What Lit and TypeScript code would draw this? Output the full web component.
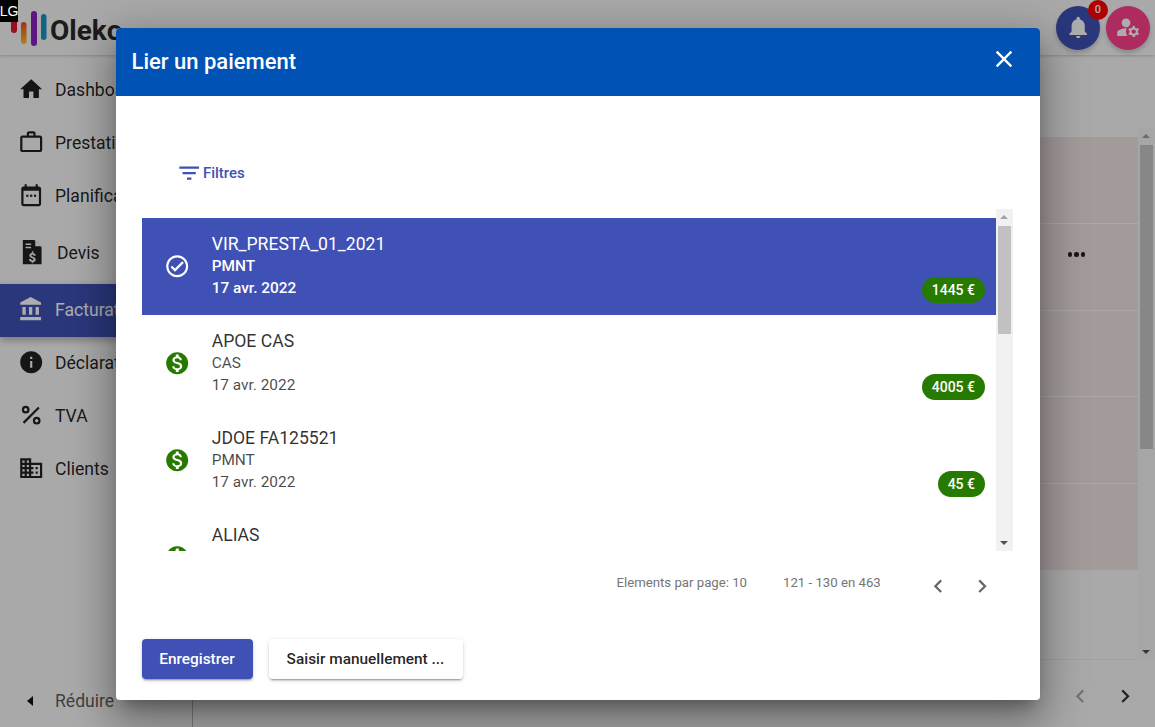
import { LitElement, html, css, svg } from "lit";
import { customElement } from "lit/decorators.js";

const P: Record<string, any> = {
  home: svg`<path d="M10 20v-6h4v6h5v-8h3L12 3 2 12h3v8z"/>`,
  work: svg`<path d="M14 6V4h-4v2h4zM4 8v11h16V8H4zm16-2c1.110 0 2 .89 2 2v11c0 1.110-.89 2-2 2H4c-1.110 0-2-.89-2-2l.01-11c0-1.110.88-2 1.990-2h4V4c0-1.110.89-2 2-2h4c1.110 0 2 .89 2 2v2h4z"/>`,
  cal: svg`<path d="M19 4h-1V2h-2v2H8V2H6v2H5c-1.100 0-2 .9-2 2v14c0 1.100.9 2 2 2h14c1.100 0 2-.9 2-2V6c0-1.100-.9-2-2-2zm0 16H5V8h14v12z"/><rect x="7.500" y="11.500" width="2" height="2"/><rect x="11" y="11.500" width="2" height="2"/><rect x="14.500" y="11.500" width="2" height="2"/>`,
  devis: svg`<path fill-rule="evenodd" d="M3.500 1h10.500l6.500 6.500V23H3.500zM6 4v1.500h5V4zM6 7v1.500h5V7z"/><path d="M14.800 1.500v5.200h5.200z" fill="#fafafa"/><text x="12" y="20.500" text-anchor="middle" font-family="Roboto" font-weight="700" font-size="12" fill="#fafafa">$</text>`,
  bank: svg`<path d="M4 10v7h3v-7H4zm6 0v7h3v-7h-3zM2 22h19v-3H2v3zm14-12v7h3v-7h-3zm-4.500-9L2 6v2h19V6l-9.500-5z"/>`,
  info: svg`<path d="M12 2C6.480 2 2 6.480 2 12s4.480 10 10 10 10-4.480 10-10S17.520 2 12 2zm1 15h-2v-6h2v6zm0-8h-2V7h2v2z"/>`,
  pct: svg`<path d="M18.300 4.300 4.300 18.300l1.400 1.400 14-14z"/><path fill-rule="evenodd" d="M7 3.500a3.500 3.500 0 1 0 0 7 3.500 3.500 0 0 0 0-7zm0 2a1.500 1.500 0 1 1 0 3 1.500 1.500 0 0 1 0-3zM17 13.500a3.500 3.500 0 1 0 0 7 3.500 3.500 0 0 0 0-7zm0 2a1.500 1.500 0 1 1 0 3 1.500 1.500 0 0 1 0-3z"/>`,
  domain: svg`<path d="M12 7V3H2v18h20V7H12zM6 19H4v-2h2v2zm0-4H4v-2h2v2zm0-4H4V9h2v2zm0-4H4V5h2v2zm4 12H8v-2h2v2zm0-4H8v-2h2v2zm0-4H8V9h2v2zm0-4H8V5h2v2zm10 12h-8v-2h2v-2h-2v-2h2v-2h-2V9h8v10zm-2-8h-2v2h2v-2zm0 4h-2v2h2v-2z"/>`,
  money: svg`<path d="M12 2C6.480 2 2 6.480 2 12s4.480 10 10 10 10-4.480 10-10S17.520 2 12 2zm1.410 16.090V20h-2.670v-1.930c-1.710-.36-3.160-1.460-3.270-3.400h1.960c.1 1.050.82 1.870 2.650 1.870 1.960 0 2.400-.98 2.400-1.590 0-.83-.44-1.610-2.670-2.140-2.480-.6-4.180-1.620-4.180-3.670 0-1.720 1.390-2.840 3.110-3.210V4h2.670v1.950c1.860.45 2.790 1.860 2.850 3.390H14.300c-.05-1.110-.64-1.870-2.220-1.870-1.500 0-2.400.68-2.400 1.640 0 .84.65 1.390 2.670 1.910s4.180 1.390 4.180 3.910c-.01 1.830-1.380 2.830-3.120 3.160z"/>`,
  check: svg`<path d="M12 2C6.480 2 2 6.480 2 12s4.480 10 10 10 10-4.480 10-10S17.520 2 12 2zm0 18c-4.410 0-8-3.590-8-8s3.590-8 8-8 8 3.590 8 8-3.590 8-8 8zm4.590-12.420L10 14.170l-2.590-2.580L6 13l4 4 8-8z"/>`,
  bell: svg`<path d="M12 22c1.100 0 2-.9 2-2h-4c0 1.100.89 2 2 2zm6-6v-5c0-3.070-1.640-5.640-4.500-6.320V4c0-.83-.67-1.500-1.500-1.500s-1.500.67-1.500 1.500v.68C7.630 5.360 6 7.920 6 11v5l-2 2v1h16v-1l-2-2z"/>`,
  manage: svg`<circle cx="10" cy="8" r="4"/><path d="M10.670 13.020c-.22-.01-.44-.02-.67-.02-2.420 0-4.680.67-6.610 1.820-.88.52-1.390 1.500-1.390 2.530V20h9.260c-.79-1.130-1.260-2.510-1.260-4 0-1.070.25-2.070.67-2.980z"/><path d="M20.750 16c0-.22-.03-.42-.06-.63l1.140-1.010-1-1.730-1.450.49c-.32-.27-.68-.48-1.080-.63L18 11h-2l-.3 1.490c-.4.15-.76.36-1.080.63l-1.450-.49-1 1.730 1.140 1.010c-.03.21-.06.41-.06.63s.03.42.06.63l-1.140 1.010 1 1.730 1.450-.49c.32.27.68.48 1.080.63L16 21h2l.3-1.490c.4-.15.76-.36 1.080-.63l1.450.49 1-1.730-1.140-1.010c.03-.21.06-.41.06-.63zM17 18c-1.100 0-2-.9-2-2s.9-2 2-2 2 .9 2 2-.9 2-2 2z"/>`,
  close: svg`<path d="M19 6.410 17.590 5 12 10.590 6.410 5 5 6.410 10.590 12 5 17.590 6.410 19 12 13.410 17.590 19 19 17.590 13.410 12z"/>`,
  left: svg`<path d="M15.410 7.410 14 6l-6 6 6 6 1.410-1.410L10.830 12z"/>`,
  right: svg`<path d="M10 6 8.590 7.410 13.170 12l-4.580 4.590L10 18l6-6z"/>`,
  filter: svg`<path d="M10 18h4v-2h-4v2zM3 6v2h18V6H3zm3 7h12v-2H6v2z"/>`,
};
const ic = (n: string, cls = "") => html`<svg class="ic ${cls}" viewBox="0 0 24 24" fill="currentColor">${P[n]}</svg>`;

const NAV = [
  ["home", "Dashboard"], ["work", "Prestations"], ["cal", "Planification"], ["devis", "Devis"],
  ["bank", "Facturation"], ["info", "Déclarations"], ["pct", "TVA"], ["domain", "Clients"],
];
const ITEMS = [
  ["VIR_PRESTA_01_2021", "PMNT", "17 avr. 2022", "1445 €", true],
  ["APOE CAS", "CAS", "17 avr. 2022", "4005 €", false],
  ["JDOE FA125521", "PMNT", "17 avr. 2022", "45 €", false],
  ["ALIAS", "CAS", "17 avr. 2022", "120 €", false],
];

@customElement("app-root")
export class AppRoot extends LitElement {
  static styles = css`
    :host { display: block; position: relative; width: 1155px; height: 727px; overflow: hidden; background: #fafafa; font-family: Roboto, sans-serif; color: rgba(0,0,0,.87); }
    * { box-sizing: border-box; }
    .ic { display: block; width: 26.4px; height: 26.4px; flex: none; }
    .shell { display: flex; flex-direction: column; height: 727px; }
    .top { height: 55px; flex: none; display: flex; align-items: center; background: #fafafa; box-shadow: 0 1px 3px rgba(0,0,0,.2); position: relative; z-index: 2; padding: 0 5px 0 11px; }
    .logo { display: flex; align-items: center; flex: 1; }
    .logo svg { display: block; width: 36px; height: 40px; margin-top: 5px; }
    .logo span { font-size: 28px; font-weight: 700; color: #2a2a2a; margin-left: 3px; margin-top: 5px; }
    .fab { width: 44px; height: 44px; border-radius: 50%; display: flex; align-items: center; justify-content: center; color: #fff; position: relative; box-shadow: 0 3px 5px rgba(0,0,0,.2); }
    .fab.blue { background: #3f51b5; margin-right: 6px; }
    .fab.pink { background: #ff408c; }
    .notif { position: absolute; top: -6px; right: -8px; width: 20px; height: 20px; border-radius: 50%; background: #ff0000; font-size: 11px; font-weight: 500; display: flex; align-items: center; justify-content: center; color: #fff; }
    .main { flex: 1; display: flex; min-height: 0; }
    .side { width: 192px; flex: none; display: flex; flex-direction: column; padding-top: 9px; background: #fafafa; }
    .nav { height: 53px; flex: none; display: flex; align-items: center; gap: 11.1px; padding: 0 0 2px 17.5px; font-size: 17.6px; white-space: nowrap; }
    .nav.on { background: #3f51b5; color: #fff; box-shadow: 0 3px 8px rgba(0,0,0,.3); }
    .nav.devis { height: 61px; gap: 12px; padding-left: 18.6px; }
    .spring { flex: 1; }
    .reduce { height: 67px; flex: none; display: flex; align-items: center; padding: 14px 0 0 27px; color: rgba(0,0,0,.65); font-size: 17.6px; }
    .reduce i { width: 0; height: 0; border: 5px solid transparent; border-left-width: 0; border-right: 6px solid #111; margin-right: 22px; }
    .work { flex: 1; min-width: 0; display: flex; flex-direction: column; border-left: 1px solid #b8b8b8; }
    .mid { flex: 1; display: flex; min-height: 0; }
    .pane { flex: 1; padding-top: 82px; border-bottom: 1px solid #eee; }
    .table { height: 433px; background: #f1e3e3; display: flex; flex-direction: column; }
    .row { flex: 1; border-bottom: 1px solid #fafafa; display: flex; align-items: center; justify-content: flex-end; padding-right: 53px; }
    .row:last-child { border-bottom: 0; }
    .dots { display: flex; gap: 2px; margin-top: -24px; }
    .dots b { width: 4.500px; height: 4.500px; border-radius: 50%; background: #222; }
    .psb { width: 17px; flex: none; margin-top: 73px; background: #f5f5f5; position: relative; display: flex; flex-direction: column; align-items: center; padding-top: 17px; }
    .psb u { display: block; width: 13px; height: 304px; background: #c8c8c8; }
    .arr-up { position: absolute; top: 6px; left: 4px; border: 4px solid transparent; border-top: 0; border-bottom: 4px solid #a0a0a0; }
    .arr-dn { position: absolute; bottom: 6px; left: 4px; border: 4px solid transparent; border-bottom: 0; border-top: 4px solid #505050; }
    .foot { height: 67px; flex: none; display: flex; align-items: center; justify-content: flex-end; padding: 6px 16.800px 0 0; gap: 18.600px; color: #333; }
    .foot .dim { color: #aaa; }

    .overlay { position: absolute; inset: 0; background: rgba(0,0,0,.32); z-index: 5; display: flex; align-items: center; justify-content: center; }
    .wrap { border-radius: 4px; box-shadow: 0 11px 15px -7px rgba(0,0,0,.3), 0 24px 38px 3px rgba(0,0,0,.2), 0 9px 46px 8px rgba(0,0,0,.18); }
    .dlg { width: 924px; height: 672px; background: #fff; border-radius: 4px; display: flex; flex-direction: column; overflow: hidden; }
    .dh { height: 68px; flex: none; background: #0052b4; color: #fff; display: flex; align-items: center; justify-content: space-between; padding: 0 22px 0 16px; font-size: 22px; font-weight: 500; }
    .dh .ic { width: 28px; height: 28px; margin-top: -6px; }
    .filters { height: 113px; flex: none; display: flex; align-items: center; gap: 1px; padding: 41px 0 0 60px; color: #3f51b5; font-size: 15px; font-weight: 500; }
    .filters .ic { margin-top: 2px; }
    .listbox { height: 342px; flex: none; margin: 0 27px 0 26px; display: flex; }
    .list { flex: 1; min-width: 0; padding-top: 9px; overflow: hidden; }
    .item { height: 97px; display: flex; align-items: center; position: relative; padding-left: 22.800px; color: rgba(0,0,0,.87); }
    .item.on { background: #3f51b5; color: #fff; font-weight: 500; }
    .item > .ic { color: #267a00; }
    .item.on > .ic { color: #fff; }
    .txt { margin-left: 21px; display: flex; flex-direction: column; font-size: 15.4px; line-height: 22px; color: rgba(0,0,0,.72); }
    .on .txt { color: #fff; }
    .txt b { font-weight: 400; font-size: 17.6px; color: rgba(0,0,0,.82); }
    .on .txt b { color: #fff; }
    .badge { position: absolute; right: 11px; bottom: 12px; height: 26px; padding: 0 9.500px; border-radius: 13px; background: #267a00; color: #fff; font-size: 14px; font-weight: 500; display: flex; align-items: center; }
    .sb { width: 17px; flex: none; background: #f1f1f1; position: relative; padding: 17px 2px 0; }
    .sb u { display: block; height: 108px; background: #c1c1c1; }
    .sb .up { position: absolute; top: 6px; left: 4px; border: 4px solid transparent; border-top: 0; border-bottom: 4px solid #a3a3a3; }
    .sb .dn { position: absolute; bottom: 6px; left: 4px; border: 4px solid transparent; border-bottom: 0; border-top: 4px solid #505050; }
    .pag { height: 55px; flex: none; display: flex; align-items: flex-start; padding: 24px 0 0 501px; font-size: 13.2px; color: #757575; }
    .pag .range { margin-left: 36px; }
    .pag .nb { display: flex; margin-left: 43.800px; gap: 17.600px; margin-top: -1.200px; }
    .pag .nb .ic { color: #666; }
    .acts { display: flex; gap: 16px; padding: 33px 0 0 26px; }
    .btn { height: 40px; border-radius: 4px; display: flex; align-items: center; justify-content: center; font-size: 15.4px; font-weight: 500; box-shadow: 0 3px 1px -2px rgba(0,0,0,.2), 0 2px 2px 0 rgba(0,0,0,.14), 0 1px 5px 0 rgba(0,0,0,.12); }
    .btn.p { width: 111px; background: #3f51b5; color: #fff; }
    .btn.s { width: 194px; background: #fff; color: rgba(0,0,0,.87); }
    .lg { position: absolute; left: 0; top: 0; width: 18px; height: 22px; background: #000; color: #fff; font-size: 14px; z-index: 9; display: flex; align-items: center; justify-content: center; font-family: "Liberation Sans", sans-serif; }
  `;

  render() {
    return html`
      <div class="shell">
        <div class="top">
          <div class="logo">
            <svg viewBox="0 0 36 40">
              <defs><linearGradient id="og" x1="0" y1="0" x2="0" y2="1"><stop offset="0" stop-color="#f04a20"/><stop offset="1" stop-color="#ffc020"/></linearGradient></defs>
              <rect x="0" y="8" width="6" height="15" rx="3" fill="#e0182c"/>
              <rect x="10" y="12" width="5.500" height="22" rx="2.750" fill="url(#og)"/>
              <rect x="20" y="1" width="6" height="35" rx="3" fill="#8a22c0"/>
              <rect x="30" y="4" width="5.500" height="26" rx="2.750" fill="#2092c0"/>
            </svg>
            <span>Oleko</span>
          </div>
          <div class="fab blue">${ic("bell")}<div class="notif">0</div></div>
          <div class="fab pink">${ic("manage")}</div>
        </div>
        <div class="main">
          <div class="side">
            ${NAV.map(([i, t], k) => html`<div class="nav ${k === 4 ? "on" : ""} ${k === 3 ? "devis" : ""}">${ic(i)}<span>${t}</span></div>`)}
            <div class="spring"></div>
            <div class="reduce"><i></i><span>Réduire</span></div>
          </div>
          <div class="work">
            <div class="mid">
              <div class="pane">
                <div class="table">
                  <div class="row"></div>
                  <div class="row"><div class="dots"><b></b><b></b><b></b></div></div>
                  <div class="row"></div><div class="row"></div><div class="row"></div>
                </div>
              </div>
              <div class="psb"><span class="arr-up"></span><u></u><span class="arr-dn"></span></div>
            </div>
            <div class="foot">${ic("left", "dim")}${ic("right")}</div>
          </div>
        </div>
      </div>

      <div class="overlay">
        <div class="wrap">
          <div class="dlg">
            <div class="dh"><span>Lier un paiement</span>${ic("close")}</div>
            <div class="filters">${ic("filter")}<span>Filtres</span></div>
            <div class="listbox">
              <div class="list">
                ${ITEMS.map(([a, b, c, d, on]) => html`
                  <div class="item ${on ? "on" : ""}">
                    ${ic(on ? "check" : "money")}
                    <div class="txt"><b>${a}</b><span>${b}</span><span>${c}</span></div>
                    <div class="badge">${d}</div>
                  </div>`)}
              </div>
              <div class="sb"><span class="up"></span><u></u><span class="dn"></span></div>
            </div>
            <div class="pag">
              <span>Elements par page: 10</span>
              <span class="range">121 - 130 en 463</span>
              <div class="nb">${ic("left")}${ic("right")}</div>
            </div>
            <div class="acts">
              <div class="btn p">Enregistrer</div>
              <div class="btn s">Saisir manuellement ...</div>
            </div>
          </div>
        </div>
      </div>
      <div class="lg">LG</div>
    `;
  }
}
